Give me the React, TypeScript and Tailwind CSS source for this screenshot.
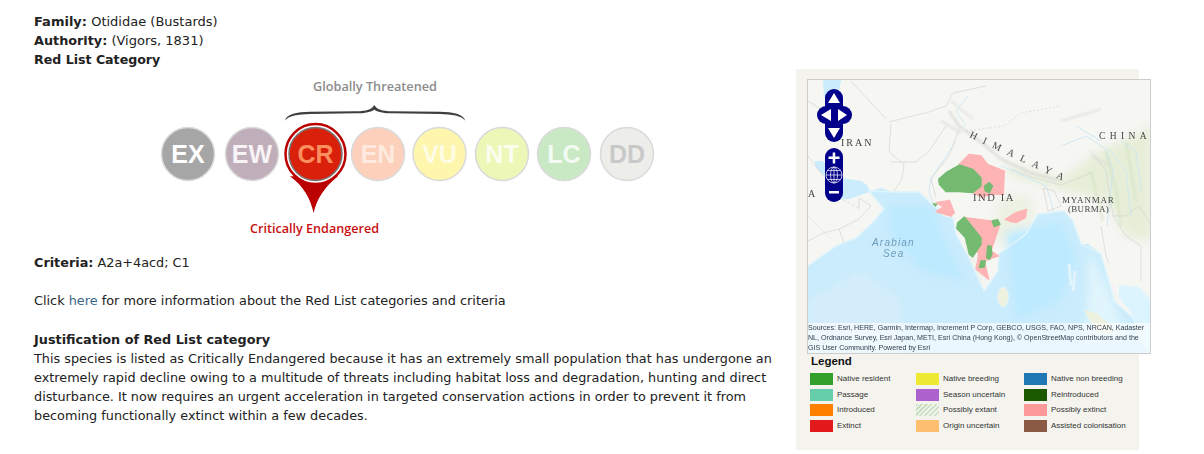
const categories = [
  { code: "EX", cx: 188, fill: "#a6a6a6", text: "#ffffff" },
  { code: "EW", cx: 252, fill: "#c0aeba", text: "#f7f3f6" },
  { code: "CR", cx: 315.5, fill: "#d9200a", text: "#fb8f5f" },
  { code: "EN", cx: 378, fill: "#fdd0bc", text: "#feeade" },
  { code: "VU", cx: 439.5, fill: "#fdf6ac", text: "#fffce6" },
  { code: "NT", cx: 502, fill: "#ecf7b8", text: "#fbfeee" },
  { code: "LC", cx: 564, fill: "#c9e9c4", text: "#f4fbf2" },
  { code: "DD", cx: 627, fill: "#ededea", text: "#c9c9c9" },
];

const legend = [
  { label: "Native resident", swatch: "bg-[#33a02c]" },
  { label: "Native breeding", swatch: "bg-[#eeea33]" },
  { label: "Native non breeding", swatch: "bg-[#1f78b4]" },
  { label: "Passage", swatch: "bg-[#66cdaa]" },
  { label: "Season uncertain", swatch: "bg-[#ab62cc]" },
  { label: "Reintroduced", swatch: "bg-[#1a5900]" },
  { label: "Introduced", swatch: "bg-[#ff7f00]" },
  {
    label: "Possibly extant",
    swatch: "bg-[repeating-linear-gradient(135deg,#c6dfc0_0_1.5px,#f1f3ea_1.5px_3.5px)]",
  },
  { label: "Possibly extinct", swatch: "bg-[#fb9a99]" },
  { label: "Extinct", swatch: "bg-[#e31a1c]" },
  { label: "Origin uncertain", swatch: "bg-[#fdbf6f]" },
  { label: "Assisted colonisation", swatch: "bg-[#8b5a44]" },
];

const CategoryGraphic = () => (
  <svg width="520" height="175" viewBox="150 70 520 175" className="block ml-[116px]">
    <text
      x="375"
      y="92"
      textAnchor="middle"
      fill="#8c8c8c"
      fontSize="12.7"
      fontWeight="600"
      fontFamily="'Open Sans', sans-serif"
    >
      Globally Threatened
    </text>
    <g transform="translate(150 70) scale(.3333)">
      <path
        d="M405 155 C410 134 440 129 480 128 L620 127 C650 126 665 122 673 108 C681 122 696 126 726 127 L870 128 C910 129 940 134 946 155 C935 140 905 136 870 135 L726 133 C700 133 682 128 673 122 C664 128 646 133 620 133 L480 135 C445 136 415 140 405 155 Z"
        fill="#3f3f3f"
      />
      <path d="M420 322 C462 352 482 392 491 432 C500 392 522 355 564 322 Z" fill="#bb0000" />
    </g>
    <circle cx="315.5" cy="155" r="30" fill="#fff" stroke="#bb0000" strokeWidth="2.5" />
    {categories.map((c) => (
      <g key={c.code}>
        <circle
          cx={c.cx}
          cy="155"
          r="26.5"
          fill={c.fill}
          stroke={c.code === "CR" ? "#777" : "#dadada"}
          strokeWidth="1.5"
        />
        <text
          x={c.cx}
          y="164"
          textAnchor="middle"
          fill={c.text}
          fontSize="25"
          fontWeight="700"
          fontFamily="'Liberation Sans', sans-serif"
        >
          {c.code}
        </text>
      </g>
    ))}
    <text
      x="314.5"
      y="234"
      textAnchor="middle"
      fill="#c81010"
      fontSize="12.6"
      fontWeight="600"
      fontFamily="'Open Sans', sans-serif"
    >
      Critically Endangered
    </text>
  </svg>
);

const MapDrawing = () => (
  <svg width="344" height="275" viewBox="807 79 344 275" className="absolute inset-0 block">
    <defs>
      <filter id="soft" x="-20%" y="-20%" width="140%" height="140%">
        <feGaussianBlur stdDeviation="4" />
      </filter>
      <filter id="softer" x="-20%" y="-20%" width="140%" height="140%">
        <feGaussianBlur stdDeviation="1" />
      </filter>
    </defs>
    <rect x="807" y="79" width="344" height="275" fill="#f6f6f3" />

    {/* vegetation */}
    <g filter="url(#soft)" fill="#e6eed8">
      <path d="M1005 165 L1062 178 L1090 155 L1130 135 L1151 125 L1151 240 L1125 235 L1105 200 L1060 188 L1010 175 Z" />
      <path d="M1000 195 L1030 195 L1033 215 L1002 245 L990 230 Z" opacity=".6" />
      <path d="M960 240 L975 260 L985 285 L975 280 Z" opacity=".6" />
    </g>
    <g filter="url(#softer)" fill="none" stroke="#d9d9d4" strokeWidth="1.5" opacity=".8">
      <path d="M948 110 L958 125 L975 137 L1000 158 L1030 172 L1060 180" strokeWidth="2.5" />
      <path d="M950 100 L972 118 M940 120 L960 132 M1060 120 L1100 108 M1090 155 L1110 165" />
      <path d="M1105 150 L1115 190 L1120 225 M1125 140 L1135 200 M1090 170 L1102 220" stroke="#cfdfba" />
    </g>

    {/* sea */}
    <path
      d="M807 265 L835 245 L855 237 L873 220 L883 208 L868 190 L880 187 L892 191 L918 191 L930 202 L933 205 L942 215 L952 217 L955 233 L968 257 L980 284 L983 290 L990 282 L997 270 L998 253 L1025 233 L1037 213 L1063 210 L1072 220 L1080 243 L1087 243 L1100 253 L1107 277 L1113 300 L1132 317 L1135 330 L1151 354 L807 354 Z"
      fill="#caecfc"
    />
    <path
      d="M1118 284 L1138 286 L1151 300 L1151 354 L1140 340 L1130 312 L1118 296 Z"
      fill="#dcf4fd"
    />
    <g transform="translate(805 130) scale(.3333)">
      <path
        d="M25 90 L50 90 L100 140 L165 150 L180 160 L195 182 L170 190 L130 205 L100 205 L90 170 L60 140 L30 110 Z"
        fill="#caecfc"
      />
    </g>
    <path d="M822 79 L840 79 L838 91 L842 101 L828 105 L823 95 Z" fill="#caecfc" />
    <g filter="url(#soft)">
      <path d="M885 205 L930 205 L945 240 L965 280 L920 270 L890 235 Z" fill="#bdeafe" />
      <path d="M1005 232 L1060 220 L1075 255 L1060 300 L1015 320 Z" fill="#bdeaff" />
      <path d="M807 300 L860 270 L900 300 L900 354 L807 354 Z" fill="#d5edfa" />
      <path d="M1088 250 L1112 300 L1125 335 L1085 340 Z" fill="#e0f5fc" />
    </g>
    <path
      d="M807 265 L835 245 L855 237 L873 220 L883 208 L868 190 L892 191 L918 191 L933 205 L952 217 L955 233 L968 257 L983 290 L997 270 L998 253 L1025 233 L1037 213 L1063 210 L1072 220 L1080 243 L1100 253 L1107 277 L1113 300 L1132 317"
      fill="none"
      stroke="#e0f4fb"
      strokeWidth="1.5"
    />
    <ellipse cx="1002" cy="296" rx="5.5" ry="10" fill="#eef1de" stroke="#e0f4fb" />
    <path d="M1083 309 L1095 312 L1110 325 L1112 332 L1098 332 L1088 318 Z" fill="#eef1de" />
    <path d="M1068 263 L1070 285 M1074 270 L1072 290" stroke="#e0f4fb" strokeWidth="3" fill="none" />

    {/* rivers */}
    <g fill="none" stroke="#cbe7f3" strokeWidth=".9">
      <path d="M955 140 L942 160 L930 177 L928 190 L932 202" />
      <path d="M1000 165 L1030 178 L1045 185 L1050 200 L1052 210" />
      <path d="M1060 145 L1085 135 L1105 148 L1112 170 L1106 225" />
      <path d="M1108 148 L1125 170 L1130 215 M1075 125 L1100 140 M1120 140 L1135 150 L1140 190" />
      <path d="M967 95 L955 110 L965 125" />
    </g>

    {/* borders */}
    <g fill="none" stroke="#d4d4d2" strokeWidth=".7">
      <path d="M888 121 L928 111 L945 105 L952 92 L985 85" />
      <path d="M890 123 L888 151 L903 163 L901 178 L893 190" />
      <path d="M890 161 L915 161 L928 150 L945 125" />
      <path d="M958 128 L948 155 L930 178 L935 196" />
      <path d="M807 240 L822 232 L838 228 L858 218 L870 205 L858 197 L858 208" />
      <path d="M838 228 L843 242" />
      <path d="M842 199 L858 207" strokeDasharray="3 2" />
      <path d="M965 130 L1003 125 L1020 112 L1060 105" strokeDasharray="2 2" />
      <path d="M1090 150 L1105 170 L1112 215 L1125 215 L1138 205 L1151 225" />
      <path d="M1100 225 L1105 255 L1108 262 M1112 215 L1125 235 L1140 245 L1140 280" />
      <path d="M1042 187 L1047 210 L1060 205 L1053 190 Z" />
      <path d="M1010 168 L1030 176 L1060 184 L1090 172" />
      <path d="M807 155 L822 175 M850 80 L885 118 M807 100 L830 115" />
      <path d="M807 215 L830 238 M807 340 L815 328" opacity=".5" />
    </g>

    {/* ranges */}
    <g transform="translate(925 140) scale(.3333)" strokeLinejoin="round" strokeWidth="4">
      <g fill="#feb4b4" stroke="#feb4b4">
        <path d="M100 70 L130 40 L165 45 L185 70 L235 90 L232 160 L190 160 L170 170 L130 150 Z" />
        <path d="M30 185 L70 178 L85 215 L75 225 L30 212 L52 198 Z" />
        <path d="M118 230 L195 240 L220 255 L195 330 L218 345 L175 360 L188 415 L150 385 L158 340 L130 280 Z" />
        <path d="M238 235 L270 215 L302 205 L298 230 L270 245 L250 240 Z" />
      </g>
      <g fill="#74bb71" stroke="#74bb71">
        <path d="M38 115 L60 95 L100 72 L140 85 L165 110 L165 135 L140 155 L100 152 L60 152 L40 130 Z" />
        <path d="M175 135 L190 125 L200 135 L190 155 L178 150 Z" />
        <path d="M22 188 L32 190 L28 195 Z" />
        <path d="M115 228 L165 290 L165 310 L140 348 L130 340 L118 290 L92 262 L95 245 Z" />
        <path d="M198 240 L215 236 L222 250 L205 257 Z" />
        <path d="M185 315 L195 315 L198 340 L190 355 L182 350 Z" />
        <path d="M165 360 L178 360 L175 378 L160 380 Z" />
      </g>
    </g>

    {/* labels */}
    <g fontFamily="'Liberation Serif', serif" fill="#444">
      <text x="840" y="145" fontSize="10" letterSpacing="2">
        IRAN
      </text>
      <text x="1098" y="138" fontSize="9.5" letterSpacing="4.4">
        CHINA
      </text>
      <text x="972" y="200" fontSize="10.5" letterSpacing="1.6">
        IND IA
      </text>
      <text x="1061" y="202" fontSize="9" letterSpacing=".8">
        MYANMAR
      </text>
      <text x="1067" y="211" fontSize="9" letterSpacing=".3">
        (BURMA)
      </text>
      <text x="807" y="196" fontSize="10">
        A
      </text>
      <text x="968" y="136" fontSize="10" letterSpacing="7.2" transform="rotate(25 968 136)">
        HIMALAYA
      </text>
    </g>
    <g fontFamily="'Liberation Sans', sans-serif" fontStyle="italic" fill="#6d9dbc" fontSize="10" letterSpacing="1.2">
      <text x="871" y="245">
        Arabian
      </text>
      <text x="882" y="256">
        Sea
      </text>
    </g>

    {/* pan and zoom */}
    <g fill="#00008b">
      <rect x="824" y="88" width="18" height="53" rx="9" />
      <rect x="816" y="105" width="35" height="18" rx="9" />
      <rect x="824" y="147" width="18" height="54" rx="9" />
    </g>
    <g fill="#fff">
      <path d="M833 92 L839 102 L827 102 Z" />
      <path d="M833 137 L827 127 L839 127 Z" />
      <path d="M820 114 L830 108 L830 120 Z" />
      <path d="M846 114 L837 108 L837 120 Z" />
      <rect x="827.5" y="155.5" width="11" height="2.5" />
      <rect x="831.7" y="151.5" width="2.5" height="11" />
      <rect x="828" y="190" width="10" height="2.5" />
    </g>
    <g fill="none" stroke="#fff" strokeWidth=".7">
      <circle cx="833" cy="174" r="8" />
      <ellipse cx="833" cy="174" rx="3.5" ry="8" />
      <path d="M825 174 L841 174 M826.5 169.5 L839.5 169.5 M826.5 178.5 L839.5 178.5 M833 166 L833 182" />
    </g>
  </svg>
);

export default function App() {
  return (
    <div className="flex w-[1204px] h-[454px] overflow-hidden bg-white text-[#222] font-['DejaVu_Sans',sans-serif] text-[12.82px] leading-[19px]">
      <div className="w-[762px] shrink-0 pl-[34px] pt-[12px]">
        <div className="text-[13px]">
          <b>Family:</b> Otididae (Bustards)
        </div>
        <div className="text-[13px]">
          <b className="text-[12.8px]">Authority:</b> (Vigors, 1831)
        </div>
        <div>
          <b className="text-[12.6px]">Red List Category</b>
        </div>
        <CategoryGraphic />
        <div className="mt-[9px]">
          <b>Criteria:</b> A2a+4acd; C1
        </div>
        <div className="mt-[19px] text-[12.85px]">
          Click <span className="text-[#39688a]">here</span> for more information about the Red List categories and criteria
        </div>
        <div className="mt-[20px]">
          <b>Justification of Red List category</b>
        </div>
        <p className="w-[742px]">
          This species is listed as Critically Endangered because it has an extremely small population that has undergone an extremely rapid decline owing to a multitude of threats including habitat loss and degradation, hunting and direct disturbance. It now requires an urgent acceleration in targeted conservation actions in order to prevent it from becoming functionally extinct within a few decades.
        </p>
      </div>

      <div className="mt-[69px] ml-[34px] w-[343px] h-[381px] bg-[#f4f3ee] pt-[10px] pl-[11px] shrink-0">
        <div className="relative w-[344px] h-[275px] border border-[#ccc] overflow-hidden">
          <MapDrawing />
          <div className="absolute left-0 right-0 bottom-0 h-[30px] bg-white/60 text-[#333d4d] font-['Liberation_Sans',sans-serif] text-[7.1px] leading-[10px]">
            Sources: Esri, HERE, Garmin, Intermap, Increment P Corp, GEBCO, USGS, FAO, NPS, NRCAN, Kadaster NL, Ordnance Survey, Esri Japan, METI, Esri China (Hong Kong), © OpenStreetMap contributors and the GIS User Community. Powered by Esri
          </div>
        </div>
        <div className="font-['Liberation_Sans',sans-serif] pl-[4px] text-[#111] font-bold text-[11.5px] leading-[14px]">Legend</div>
        <div className="grid grid-cols-[106px_108px_auto] gap-y-[3.5px] mt-[5px] pl-[3px] font-['Liberation_Sans',sans-serif] text-[8px] leading-[12px] text-[#333]">
          {legend.map((item) => (
            <div key={item.label} className="flex items-center gap-[4px]">
              <span className={`w-[23px] h-[12px] shrink-0 ${item.swatch}`} />
              <span>{item.label}</span>
            </div>
          ))}
        </div>
      </div>
    </div>
  );
}
